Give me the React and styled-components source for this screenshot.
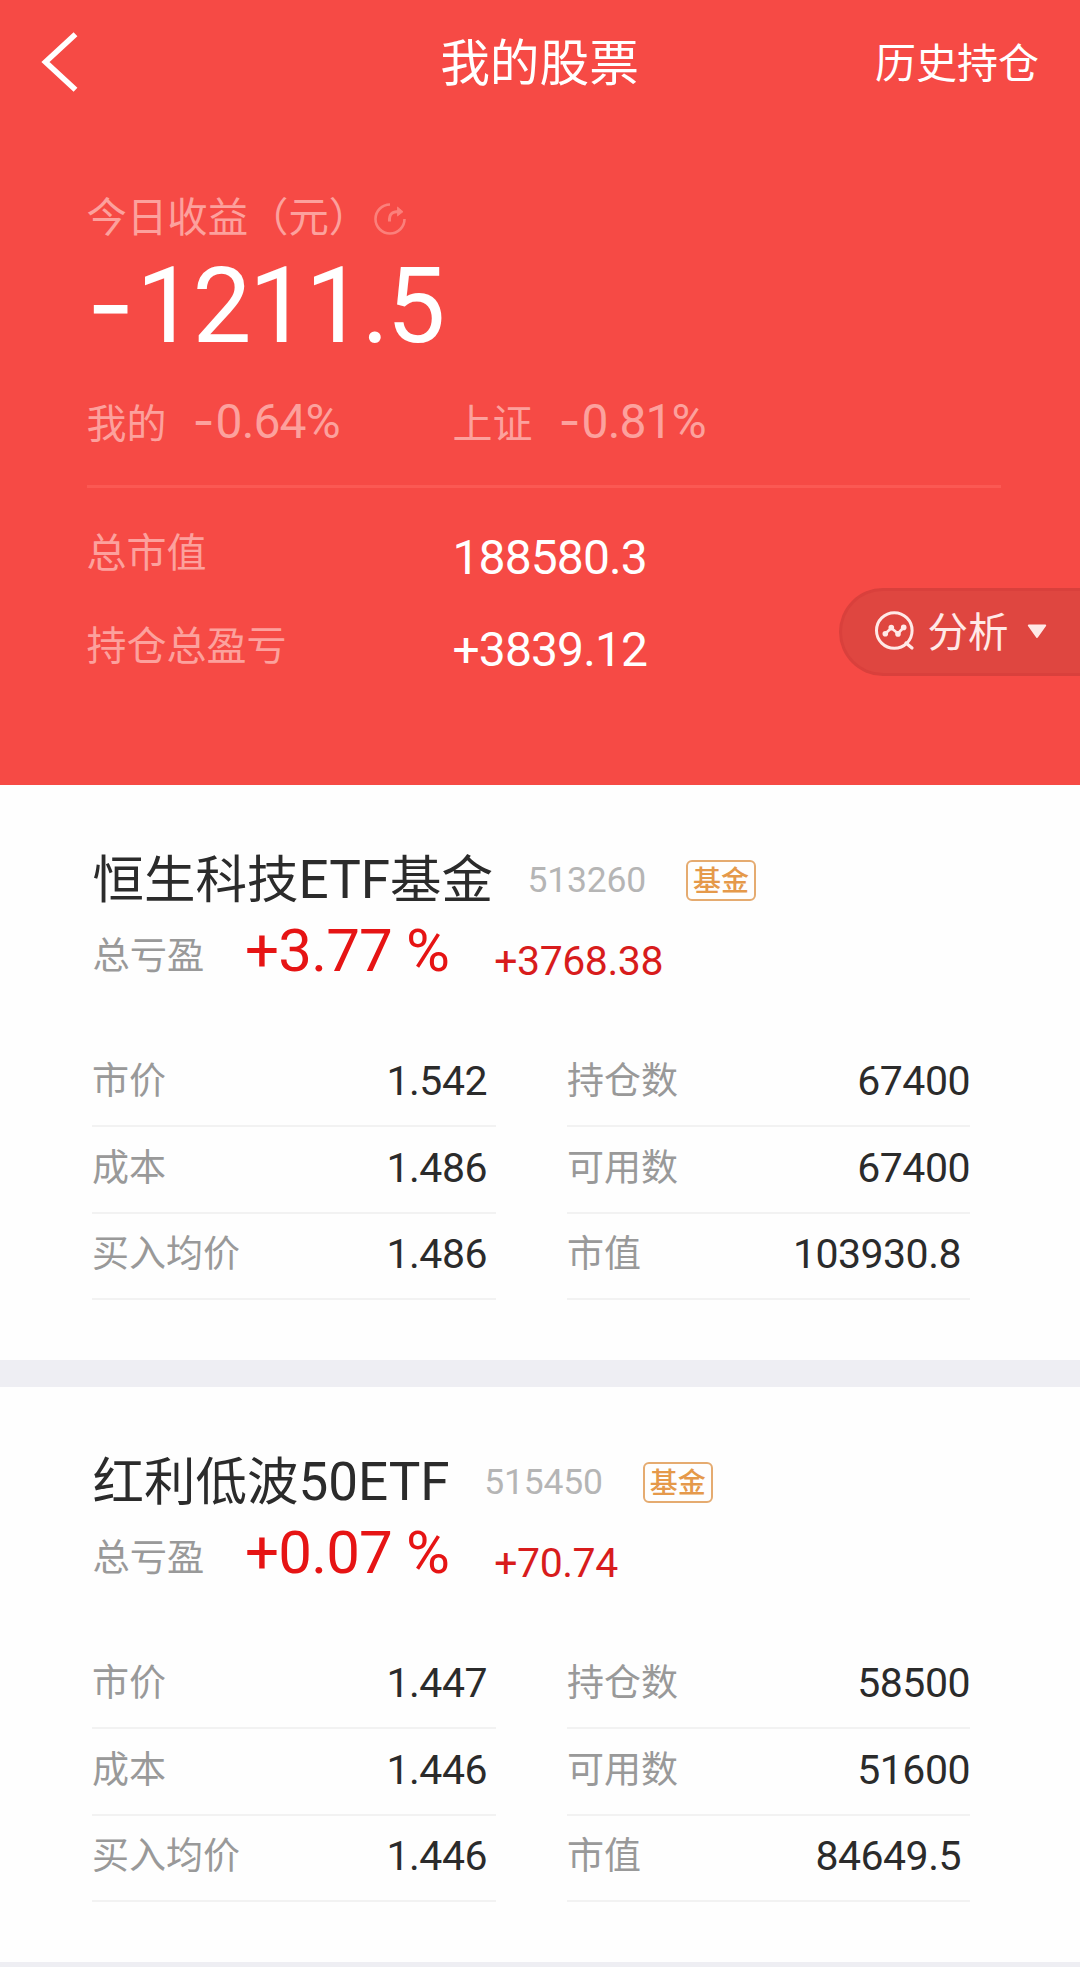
import React from "react";
import styled, { createGlobalStyle, css } from "styled-components";

const GlobalStyle = createGlobalStyle`
  body { margin: 0; background: #eeeef3; }
  * { box-sizing: border-box; }
`;

const han = css`
  font-family: "Noto Sans CJK SC", sans-serif;
  font-weight: 400;
  white-space: nowrap;
`;

const numeric = css`
  font-family: Roboto, "Noto Sans CJK SC", sans-serif;
  font-weight: 400;
  white-space: pre;
`;

const Page = styled.div`
  width: 1080px;
  height: 1967px;
  overflow: hidden;
  background: #eeeef3;
`;

const Hero = styled.header`
  position: relative;
  height: 785px;
  background: #f64a45;
  color: #fff;
`;

const NavBar = styled.nav`
  display: grid;
  grid-template-columns: 1fr auto 1fr;
  align-items: center;
  height: 118px;
  padding: 0 41px 0 40px;
`;

const BackIcon = styled.svg`
  display: block;
  width: 40px;
  height: 64px;
  margin-top: 5px;
`;

const NavTitle = styled.h1`
  ${han}
  margin: 0;
  font-size: 49.7px;
  line-height: 60px;
`;

const NavLink = styled.a`
  ${han}
  justify-self: end;
  font-size: 41px;
  line-height: 50px;
  margin-top: 1px;
`;

const Summary = styled.div`
  padding: 71.5px 0 0 86.5px;
`;

const Label = styled.span`
  ${han}
  font-size: 40px;
  line-height: 50px;
  color: #fca19d;
`;

const TodayLabel = styled(Label)`
  display: flex;
  align-items: center;
  font-size: 40.4px;
  height: 50px;
`;

const ShareIcon = styled.svg`
  width: 36px;
  height: 36px;
  margin: 9px 0 0 3px;
`;

const Sign = styled.span`
  margin-right: 0.04em;
  font-family: Inter, sans-serif;
  line-height: 0;
`;

const TodayValue = styled.div`
  ${numeric}
  height: 110px;
  margin-top: 12px;
  font-size: 105px;
  line-height: 110px;
  letter-spacing: -2.7px;
`;

const RateRow = styled.div`
  display: grid;
  grid-template-columns: 366px auto;
  margin-top: 33.5px;
  height: 50px;
`;

const Rate = styled.div`
  display: flex;
  align-items: center;
  gap: 26px;
`;

const RateValue = styled.span`
  ${numeric}
  margin-top: 2px;
  font-size: 48px;
  line-height: 50px;
  letter-spacing: -0.9px;
  color: #fca19d;
`;

const Divider = styled.div`
  width: 914px;
  height: 3px;
  margin: 40px 0 16px;
  background: #fb5953;
`;

const TotalRow = styled.div`
  display: grid;
  grid-template-columns: 366px auto;
  align-items: center;
  height: 92.5px;
`;

const TotalValue = styled.span`
  ${numeric}
  margin-top: 15px;
  font-size: 48px;
  line-height: 50px;
  letter-spacing: -0.9px;
`;

const AnalyzeButton = styled.div`
  ${han}
  position: absolute;
  top: 588px;
  right: 0;
  display: flex;
  align-items: center;
  width: 241px;
  height: 88px;
  padding-left: 32px;
  border: 3px solid #d9403c;
  border-right: 0;
  border-radius: 44px 0 0 44px;
  background: #df4640;
  color: #ffe9e7;
  font-size: 40.5px;
  line-height: 50px;

  span {
    margin: -4px 18px 0 11.5px;
  }
`;

const Holding = styled.section`
  height: 574.5px;
  margin-bottom: 27.5px;
  padding: 60.5px 0 0 92.5px;
  background: #fefefe;
`;

const TitleRow = styled.div`
  display: flex;
  align-items: center;
  height: 70px;
`;

const Name = styled.h2`
  ${numeric}
  margin: 0;
  font-size: 51.5px;
  line-height: 70px;
  color: #2b2b2b;
`;

const Latin = styled.span`
  font-size: 53px;
`;

const Code = styled.span`
  ${numeric}
  margin: -1px 40px 0 34.5px;
  font-size: 35.5px;
  line-height: 50px;
  letter-spacing: -0.2px;
  color: #b5b5b5;
`;

const Tag = styled.span`
  ${han}
  width: 70px;
  height: 41px;
  border: 2px solid #e5ab70;
  border-radius: 6px;
  font-size: 28px;
  font-weight: 500;
  line-height: 35px;
  text-align: center;
  color: #e5994a;
`;

const ProfitRow = styled.div`
  display: flex;
  align-items: center;
  height: 70px;
  margin-top: 2.5px;
`;

const ProfitLabel = styled.span`
  ${han}
  width: 152.5px;
  font-size: 37.3px;
  line-height: 50px;
  color: #999;
`;

const ProfitRate = styled.span`
  ${numeric}
  margin: -4px 45px 0 0;
  font-size: 60px;
  line-height: 66px;
  letter-spacing: -0.8px;
  color: #e61414;
`;

const ProfitAmount = styled.span`
  ${numeric}
  margin-top: 15px;
  font-size: 41px;
  line-height: 50px;
  letter-spacing: -0.45px;
  color: #d81c1c;
`;

const Details = styled.div`
  display: grid;
  grid-template-columns: 404px 403px;
  column-gap: 71px;
  grid-auto-rows: 86.5px;
  margin: 52.5px 0 0 -0.5px;
`;

const Cell = styled.div`
  display: flex;
  align-items: center;
  justify-content: space-between;
  padding: 0 ${(p) => (p.$inset ? 9 : 0)}px 9px 0;
  border-bottom: 2px solid #f2f2f2;
`;

const CellLabel = styled.span`
  ${han}
  font-size: 37px;
  line-height: 50px;
  color: #999;
`;

const CellValue = styled.span`
  ${numeric}
  margin-top: 5.5px;
  font-size: 41px;
  line-height: 50px;
  letter-spacing: -0.5px;
  color: #2b2b2b;
`;

const holdings = [
  {
    name: "恒生科技ETF基金",
    code: "513260",
    rate: "+3.77 %",
    amount: "+3768.38",
    details: [
      ["市价", "1.542"],
      ["持仓数", "67400"],
      ["成本", "1.486"],
      ["可用数", "67400"],
      ["买入均价", "1.486"],
      ["市值", "103930.8"],
    ],
  },
  {
    name: "红利低波50ETF",
    code: "515450",
    rate: "+0.07 %",
    amount: "+70.74",
    details: [
      ["市价", "1.447"],
      ["持仓数", "58500"],
      ["成本", "1.446"],
      ["可用数", "51600"],
      ["买入均价", "1.446"],
      ["市值", "84649.5"],
    ],
  },
];

function HoldingCard({ item }) {
  return (
    <Holding>
      <TitleRow>
        <Name>
          {item.name.split(/([0-9A-Z]+)/).map((part, i) =>
            i % 2 ? <Latin key={i}>{part}</Latin> : part
          )}
        </Name>
        <Code>{item.code}</Code>
        <Tag>基金</Tag>
      </TitleRow>
      <ProfitRow>
        <ProfitLabel>总亏盈</ProfitLabel>
        <ProfitRate>{item.rate}</ProfitRate>
        <ProfitAmount>{item.amount}</ProfitAmount>
      </ProfitRow>
      <Details>
        {item.details.map(([label, value]) => (
          <Cell key={label} $inset={value.includes(".")}>
            <CellLabel>{label}</CellLabel>
            <CellValue>{value}</CellValue>
          </Cell>
        ))}
      </Details>
    </Holding>
  );
}

export default function App() {
  return (
    <Page>
      <GlobalStyle />
      <Hero>
        <NavBar>
          <BackIcon viewBox="0 0 40 64" fill="none" stroke="#fff" strokeWidth="5.6">
            <path d="M35.5 4.3 L5.5 32 L35.5 59.7" />
          </BackIcon>
          <NavTitle>我的股票</NavTitle>
          <NavLink>历史持仓</NavLink>
        </NavBar>
        <Summary>
          <TodayLabel>
            今日收益（元）
            <ShareIcon viewBox="0 0 36 36" fill="none" stroke="#fb807b" strokeWidth="2.6">
              <path d="M18 3.5 A14.5 14.5 0 1 0 32.5 18" />
              <path d="M17.5 20.5 C17 13 20 10.5 27 10.5" strokeWidth="3" />
              <path d="M25.5 6 L31 10.7 L25.5 15 Z" fill="#fb807b" strokeWidth="0.8" />
            </ShareIcon>
          </TodayLabel>
          <TodayValue>
            <Sign>-</Sign>1211.5
          </TodayValue>
          <RateRow>
            <Rate>
              <Label>我的</Label>
              <RateValue>
                <Sign>-</Sign>0.64%
              </RateValue>
            </Rate>
            <Rate>
              <Label>上证</Label>
              <RateValue>
                <Sign>-</Sign>0.81%
              </RateValue>
            </Rate>
          </RateRow>
          <Divider />
          <TotalRow>
            <Label>总市值</Label>
            <TotalValue>188580.3</TotalValue>
          </TotalRow>
          <TotalRow>
            <Label>持仓总盈亏</Label>
            <TotalValue>+3839.12</TotalValue>
          </TotalRow>
        </Summary>
        <AnalyzeButton>
          <svg width="42" height="42" viewBox="0 0 42 42" fill="none" stroke="#ffe9e7" strokeLinecap="round" strokeLinejoin="round">
            <circle cx="20.3" cy="19.5" r="17.8" strokeWidth="3" />
            <path d="M32 32 L38 37" strokeWidth="3.2" />
            <path d="M11.5 22.5 L17.3 17 L24 22.5 L29.5 16.5" strokeWidth="2.6" />
            <g fill="#ffe9e7" stroke="none">
              <circle cx="11.3" cy="22.7" r="2.8" />
              <circle cx="17.3" cy="16.6" r="2.8" />
              <circle cx="24" cy="22.9" r="2.8" />
              <circle cx="29.7" cy="16.4" r="2.8" />
            </g>
          </svg>
          <span>分析</span>
          <svg width="20" height="16" viewBox="0 0 20 16">
            <path d="M1.8 1.5 H18.2 L10 13 Z" fill="#ffe9e7" stroke="#ffe9e7" strokeWidth="2" strokeLinejoin="round" />
          </svg>
        </AnalyzeButton>
      </Hero>
      {holdings.map((item) => (
        <HoldingCard key={item.code} item={item} />
      ))}
    </Page>
  );
}
